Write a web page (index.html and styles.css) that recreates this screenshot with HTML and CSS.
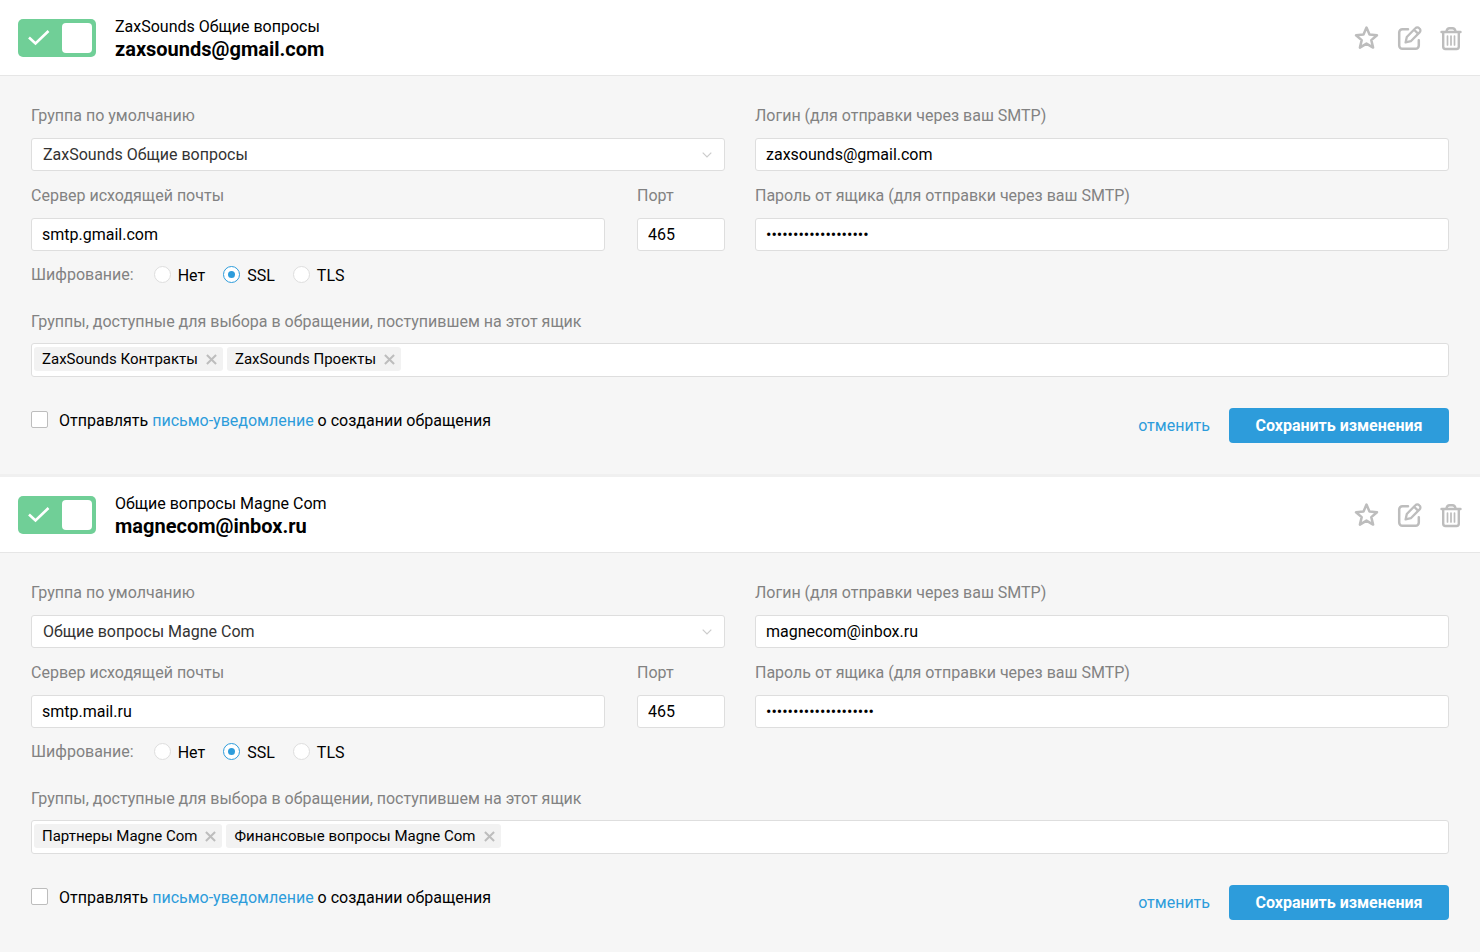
FILE: index.html
```html
<!DOCTYPE html>
<html lang="ru">
<head>
<meta charset="utf-8">
<title>Почтовые ящики</title>
<link rel="stylesheet" href="styles.css">
</head>
<body>
<svg class="sprite" aria-hidden="true">
  <symbol id="icon-star" viewBox="0 0 26 26"><path d="M12.500 2.600l3 7 7.500.6-5.700 4.900 1.800 7.500-6.600-4-6.600 4 1.800-7.500L2 10.200l7.500-.6z" fill="none" stroke="currentColor" stroke-width="2.500" stroke-linejoin="round"/></symbol>
  <symbol id="icon-edit" viewBox="0 0 26 26"><g fill="none" stroke="currentColor" stroke-width="2.500" stroke-linecap="round" stroke-linejoin="round"><path d="M12 4.200H6.400a3.200 3.200 0 0 0-3.200 3.200v13.200a3.200 3.200 0 0 0 3.200 3.200h13.200a3.200 3.200 0 0 0 3.200-3.200v-5.400"/><path d="M9.600 17.400l1.200-5.400 8.600-8.800a2.600 2.600 0 0 1 3.800 0l.4.400a2.600 2.600 0 0 1 0 3.800l-8.800 8.800zM18.400 5l3.600 3.600" stroke-width="2.300"/></g></symbol>
  <symbol id="icon-trash" viewBox="0 0 26 26"><g fill="none" stroke="currentColor" stroke-width="2.400" stroke-linecap="round" stroke-linejoin="round"><path d="M3.500 7h19M8.400 6.500c.4-2.200 1.500-3.300 3.200-3.300h2.800c1.700 0 2.800 1.100 3.200 3.300M5.200 7.500v14.300a2.200 2.200 0 0 0 2.200 2.200h11.200a2.200 2.200 0 0 0 2.200-2.200V7.500"/><path d="M9.500 11v9M13 11v9M16.500 11v9" stroke-width="1.700"/></g></symbol>
  <symbol id="icon-check" viewBox="0 0 22 16"><path d="M1 7.500l6.500 6L20.500 1" fill="none" stroke="currentColor" stroke-width="2.600"/></symbol>
  <symbol id="icon-cross" viewBox="0 0 12 12"><path d="M1 1l10 10M11 1L1 11" fill="none" stroke="currentColor" stroke-width="2.200"/></symbol>
  <symbol id="icon-chevron" viewBox="0 0 10 6"><path d="M.7.700L5 5 9.300.700" fill="none" stroke="currentColor" stroke-width="1.200"/></symbol>
</svg>

<main>
  <section class="mailbox">
    <header class="mailbox-head">
      <label class="toggle">
        <input type="checkbox" class="toggle-input" checked aria-label="Ящик zaxsounds@gmail.com включён">
        <svg class="toggle-check"><use href="#icon-check"/></svg>
      </label>
      <div class="mailbox-title">
        <p class="mailbox-name">ZaxSounds Общие вопросы</p>
        <h2 class="mailbox-email">zaxsounds@gmail.com</h2>
      </div>
      <div class="mailbox-tools">
        <button type="button" class="tool" aria-label="В избранное"><svg><use href="#icon-star"/></svg></button>
        <button type="button" class="tool" aria-label="Редактировать"><svg><use href="#icon-edit"/></svg></button>
        <button type="button" class="tool" aria-label="Удалить"><svg><use href="#icon-trash"/></svg></button>
      </div>
    </header>
    <form class="mailbox-form">
      <div class="columns">
        <div class="field">
          <label class="caption" for="group-1">Группа по умолчанию</label>
          <div class="select-wrap">
            <select class="control select" id="group-1"><option>ZaxSounds Общие вопросы</option></select>
            <svg class="chevron"><use href="#icon-chevron"/></svg>
          </div>
        </div>
        <div class="field">
          <label class="caption" for="login-1">Логин (для отправки через ваш SMTP)</label>
          <input class="control" type="text" id="login-1" value="zaxsounds@gmail.com">
        </div>
        <div class="server-row">
          <div class="field">
            <label class="caption" for="server-1">Сервер исходящей почты</label>
            <input class="control" type="text" id="server-1" value="smtp.gmail.com">
          </div>
          <div class="field">
            <label class="caption" for="port-1">Порт</label>
            <input class="control" type="text" id="port-1" value="465">
          </div>
        </div>
        <div class="field">
          <label class="caption" for="password-1">Пароль от ящика (для отправки через ваш SMTP)</label>
          <input class="control" type="password" id="password-1" value="abcdefghijklmnopqrs">
        </div>
      </div>
      <div class="encryption" role="radiogroup" aria-labelledby="encryption-1">
        <span class="caption" id="encryption-1">Шифрование:</span>
        <label class="radio"><input type="radio" name="encryption-1">Нет</label>
        <label class="radio"><input type="radio" name="encryption-1" checked>SSL</label>
        <label class="radio"><input type="radio" name="encryption-1">TLS</label>
      </div>
      <label class="caption groups-caption" for="groups-1">Группы, доступные для выбора в обращении, поступившем на этот ящик</label>
      <div class="tags">
        <span class="tag">ZaxSounds Контракты<button type="button" class="tag-remove" aria-label="Убрать ZaxSounds Контракты"><svg><use href="#icon-cross"/></svg></button></span>
        <span class="tag">ZaxSounds Проекты<button type="button" class="tag-remove" aria-label="Убрать ZaxSounds Проекты"><svg><use href="#icon-cross"/></svg></button></span>
        <input class="tags-input" type="text" id="groups-1">
      </div>
      <div class="form-foot">
        <div class="notify">
          <input type="checkbox" class="checkbox" id="notify-1">
          <label for="notify-1">Отправлять <a class="link" href="#">письмо-уведомление</a> о создании обращения</label>
        </div>
        <div class="actions">
          <a class="link" href="#">отменить</a>
          <button type="submit" class="save">Сохранить изменения</button>
        </div>
      </div>
    </form>
  </section>

  <section class="mailbox">
    <header class="mailbox-head">
      <label class="toggle">
        <input type="checkbox" class="toggle-input" checked aria-label="Ящик magnecom@inbox.ru включён">
        <svg class="toggle-check"><use href="#icon-check"/></svg>
      </label>
      <div class="mailbox-title">
        <p class="mailbox-name">Общие вопросы Magne Com</p>
        <h2 class="mailbox-email">magnecom@inbox.ru</h2>
      </div>
      <div class="mailbox-tools">
        <button type="button" class="tool" aria-label="В избранное"><svg><use href="#icon-star"/></svg></button>
        <button type="button" class="tool" aria-label="Редактировать"><svg><use href="#icon-edit"/></svg></button>
        <button type="button" class="tool" aria-label="Удалить"><svg><use href="#icon-trash"/></svg></button>
      </div>
    </header>
    <form class="mailbox-form">
      <div class="columns">
        <div class="field">
          <label class="caption" for="group-2">Группа по умолчанию</label>
          <div class="select-wrap">
            <select class="control select" id="group-2"><option>Общие вопросы Magne Com</option></select>
            <svg class="chevron"><use href="#icon-chevron"/></svg>
          </div>
        </div>
        <div class="field">
          <label class="caption" for="login-2">Логин (для отправки через ваш SMTP)</label>
          <input class="control" type="text" id="login-2" value="magnecom@inbox.ru">
        </div>
        <div class="server-row">
          <div class="field">
            <label class="caption" for="server-2">Сервер исходящей почты</label>
            <input class="control" type="text" id="server-2" value="smtp.mail.ru">
          </div>
          <div class="field">
            <label class="caption" for="port-2">Порт</label>
            <input class="control" type="text" id="port-2" value="465">
          </div>
        </div>
        <div class="field">
          <label class="caption" for="password-2">Пароль от ящика (для отправки через ваш SMTP)</label>
          <input class="control" type="password" id="password-2" value="abcdefghijklmnopqrst">
        </div>
      </div>
      <div class="encryption" role="radiogroup" aria-labelledby="encryption-2">
        <span class="caption" id="encryption-2">Шифрование:</span>
        <label class="radio"><input type="radio" name="encryption-2">Нет</label>
        <label class="radio"><input type="radio" name="encryption-2" checked>SSL</label>
        <label class="radio"><input type="radio" name="encryption-2">TLS</label>
      </div>
      <label class="caption groups-caption" for="groups-2">Группы, доступные для выбора в обращении, поступившем на этот ящик</label>
      <div class="tags">
        <span class="tag">Партнеры Magne Com<button type="button" class="tag-remove" aria-label="Убрать Партнеры Magne Com"><svg><use href="#icon-cross"/></svg></button></span>
        <span class="tag">Финансовые вопросы Magne Com<button type="button" class="tag-remove" aria-label="Убрать Финансовые вопросы Magne Com"><svg><use href="#icon-cross"/></svg></button></span>
        <input class="tags-input" type="text" id="groups-2">
      </div>
      <div class="form-foot">
        <div class="notify">
          <input type="checkbox" class="checkbox" id="notify-2">
          <label for="notify-2">Отправлять <a class="link" href="#">письмо-уведомление</a> о создании обращения</label>
        </div>
        <div class="actions">
          <a class="link" href="#">отменить</a>
          <button type="submit" class="save">Сохранить изменения</button>
        </div>
      </div>
    </form>
  </section>
</main>
</body>
</html>
```
FILE: styles.css
```css
* {
  box-sizing: border-box;
}

body {
  margin: 0;
  background: #f6f6f6;
  color: #000;
  font: 16px/24px Roboto, "Liberation Sans", sans-serif;
}

input,
select,
button {
  margin: 0;
  font: inherit;
  color: inherit;
}

button {
  padding: 0;
  border: 0;
  background: none;
  cursor: pointer;
}

svg {
  display: block;
}

.sprite {
  display: none;
}

.link {
  color: #2d9cdb;
  text-decoration: none;
}

/* Header */

.mailbox + .mailbox {
  border-top: 3px solid #f0f0f0;
}

.mailbox-head {
  display: flex;
  align-items: center;
  padding: 16px 16px 15px 18px;
  border-bottom: 1px solid #e6e6e6;
  background: #fff;
}

.toggle {
  position: relative;
  margin-right: 19px;
}

.toggle-input {
  appearance: none;
  display: flex;
  justify-content: flex-end;
  width: 78px;
  height: 38px;
  padding: 4px;
  border-radius: 5px;
  background: #70cf97;
}

.toggle-input::before {
  content: "";
  width: 30px;
  border-radius: 4px;
  background: #fff;
}

.toggle-check {
  position: absolute;
  top: 11px;
  left: 10px;
  width: 22px;
  height: 16px;
  color: #fff;
}

.mailbox-name {
  margin: 0;
  line-height: 22px;
}

.mailbox-email {
  margin: 0;
  font-size: 20px;
  font-weight: 700;
  line-height: 22px;
}

.mailbox-tools {
  display: flex;
  gap: 16px;
  margin-left: auto;
  color: #bdbdbd;
}

.tool svg {
  width: 26px;
  height: 26px;
}

/* Form */

.mailbox-form {
  padding: 28px 31px 31px;
}

.columns {
  display: grid;
  grid-template-columns: 1fr 1fr;
  gap: 13px 30px;
}

.server-row {
  display: grid;
  grid-template-columns: 1fr 88px;
  gap: 32px;
}

.field {
  display: grid;
  gap: 10px;
  min-width: 0;
}

.caption {
  color: #828282;
}

.control {
  width: 100%;
  height: 33px;
  padding: 0 10px;
  border: 1px solid #dedede;
  border-radius: 3px;
  background: #fff;
}

.select-wrap {
  position: relative;
}

.select {
  appearance: none;
  display: block;
  padding: 0 28px 0 11px;
  color: #333;
}

.chevron {
  position: absolute;
  top: 14px;
  right: 13px;
  width: 10px;
  height: 6px;
  color: #ccc;
  pointer-events: none;
}

.encryption {
  display: flex;
  align-items: flex-start;
  height: 24px;
  margin-top: 12px;
}

.encryption .caption {
  margin-right: 20px;
}

.radio {
  display: flex;
  align-items: flex-start;
  gap: 7px;
  margin-right: 18px;
  padding-top: 1px;
}

.radio input {
  appearance: none;
  display: grid;
  place-items: center;
  width: 17px;
  height: 17px;
  margin-top: 2px;
  border: 1px solid #dedede;
  border-radius: 50%;
  background: #fff;
}

.radio input:checked {
  border-color: #2d9cdb;
}

.radio input:checked::before {
  content: "";
  width: 7px;
  height: 7px;
  border-radius: 50%;
  background: #2d9cdb;
}

.groups-caption {
  display: block;
  margin: 23px 0 9px;
}

.tags {
  display: flex;
  gap: 4px;
  padding: 3px 2px 5px;
  border: 1px solid #dedede;
  border-radius: 3px;
  background: #fff;
}

.tag {
  display: flex;
  align-items: center;
  gap: 8px;
  padding: 0 6px 0 8px;
  border-radius: 3px;
  background: #f2f2f2;
  font-size: 15px;
}

.tag-remove svg {
  width: 11px;
  height: 11px;
  color: #bdbdbd;
}

.tags-input {
  flex: 1;
  min-width: 0;
  height: 24px;
  padding: 0;
  border: 0;
  outline: 0;
  background: none;
}

.form-foot {
  display: flex;
  justify-content: space-between;
  margin-top: 31px;
}

.notify {
  display: flex;
  align-items: flex-start;
  gap: 11px;
  padding-top: 1px;
}

.checkbox {
  appearance: none;
  width: 17px;
  height: 17px;
  margin-top: 2px;
  border: 1px solid #bdbdbd;
  border-radius: 2px;
  background: #fff;
}

.actions {
  display: flex;
  align-items: center;
  gap: 19px;
}

.save {
  min-width: 220px;
  height: 35px;
  padding: 0 25px;
  border-radius: 4px;
  background: #2d9cdb;
  color: #fff;
  font-weight: 700;
}
```
